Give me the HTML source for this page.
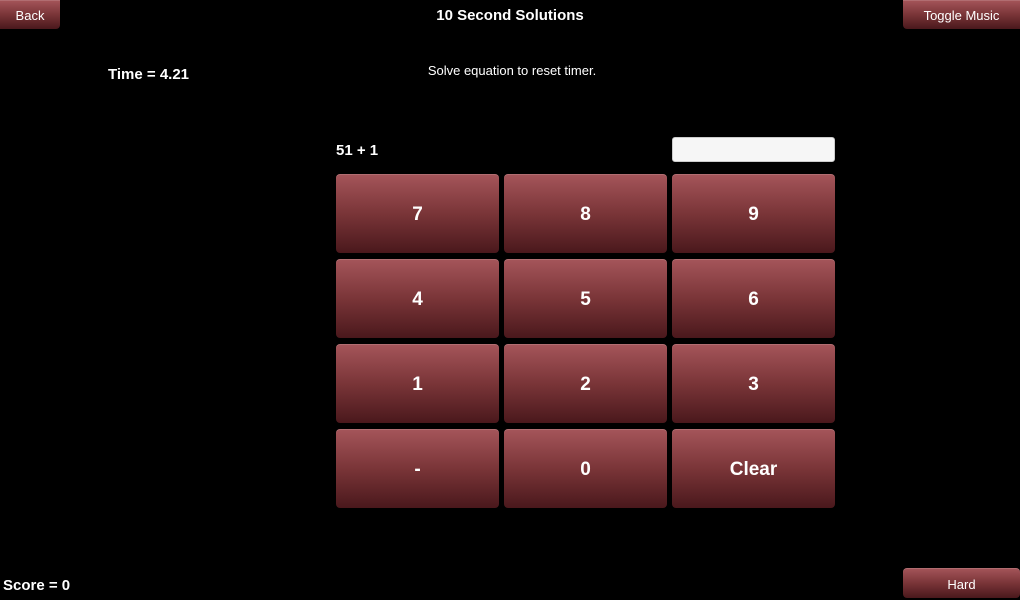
<!DOCTYPE html>
<html><head><style>
body{margin:0;width:1020px;height:600px;background:#000;position:relative;overflow:hidden;font-family:"Liberation Sans",sans-serif;color:#fff}
.b{position:absolute;background:linear-gradient(#a5555a,#7a3538 50%,#4a181c);border-radius:4px;display:flex;align-items:center;justify-content:center;color:#fff;box-shadow:inset 0 1px 0 rgba(255,255,255,.15)}
.s{font-size:13px;padding-top:2px;box-sizing:border-box}
.k{width:163px;height:79px;font-size:19px;font-weight:bold;padding-top:3px;box-sizing:border-box}
.t{position:absolute;font-weight:bold;font-size:15px}
</style></head><body>
<div class="b s" style="left:0;top:0;width:60px;height:29px;border-radius:0 0 4px 0">Back</div>
<div class="b s" style="left:903px;top:0;width:117px;height:29px;border-radius:0 0 0 4px">Toggle Music</div>
<div class="b s" style="left:903px;top:568px;width:117px;height:30px">Hard</div>
<div class="t" style="left:0;width:1020px;top:7px;text-align:center;font-size:15px">10 Second Solutions</div>
<div class="t" style="left:108px;top:66px">Time = 4.21</div>
<div style="position:absolute;left:0;width:1024px;top:63px;text-align:center;font-size:13px">Solve equation to reset timer.</div>
<div class="t" style="left:336px;top:142px">51 + 1</div>
<div style="position:absolute;left:672px;top:137px;width:161px;height:23px;background:#f6f6f6;border:1px solid #ccc;border-radius:3px"></div>
<div class="t" style="left:3px;top:577px">Score = 0</div>
<div class="b k" style="left:336px;top:174px">7</div>
<div class="b k" style="left:504px;top:174px">8</div>
<div class="b k" style="left:672px;top:174px">9</div>
<div class="b k" style="left:336px;top:259px">4</div>
<div class="b k" style="left:504px;top:259px">5</div>
<div class="b k" style="left:672px;top:259px">6</div>
<div class="b k" style="left:336px;top:344px">1</div>
<div class="b k" style="left:504px;top:344px">2</div>
<div class="b k" style="left:672px;top:344px">3</div>
<div class="b k" style="left:336px;top:429px">-</div>
<div class="b k" style="left:504px;top:429px">0</div>
<div class="b k" style="left:672px;top:429px">Clear</div>
</body></html>
